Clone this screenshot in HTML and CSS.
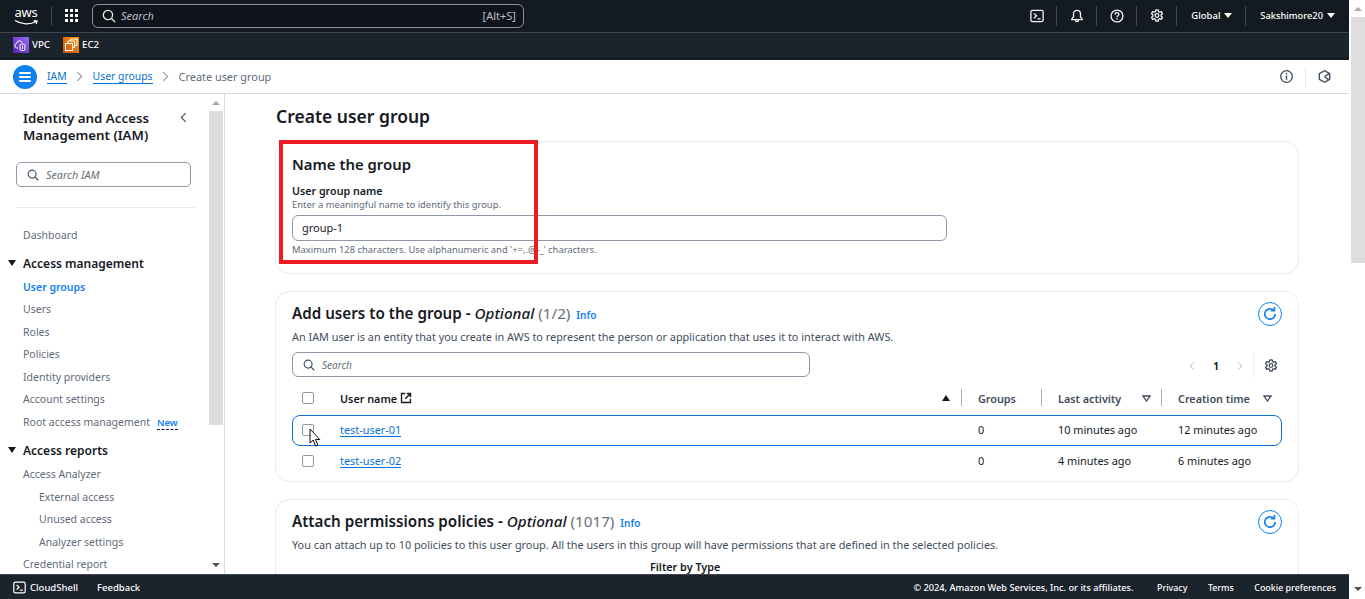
FILE: index.html
```html
<!DOCTYPE html>
<html lang="en">
<head>
<meta charset="utf-8">
<title>Create user group</title>
<link rel="stylesheet" href="styles.css">
</head>
<body>
<svg class="defs" width="0" height="0" aria-hidden="true">
  <symbol id="i-search" viewBox="0 0 16 16"><circle cx="6.8" cy="6.8" r="5.3" fill="none" stroke="currentColor" stroke-width="1.5"/><path d="M10.8 10.8L15 15" fill="none" stroke="currentColor" stroke-width="1.6"/></symbol>
  <symbol id="i-gear" viewBox="0 0 16 16"><path d="M6.7 1h2.6l.4 2 1.3.7 1.9-.7 1.3 2.3-1.5 1.3v1.600l1.500 1.300-1.300 2.300-1.900-.7-1.300.7-.4 2H6.700l-.4-2-1.300-.7-1.900.7-1.300-2.300 1.500-1.300V6.600L1.800 5.300 3.100 3l1.900.7 1.300-.7z" fill="none" stroke="currentColor" stroke-width="1.5" stroke-linejoin="round"/><circle cx="8" cy="7.4" r="2.1" fill="none" stroke="currentColor" stroke-width="1.5"/></symbol>
  <symbol id="i-shell" viewBox="0 0 16 16"><rect x="1" y="1.5" width="14" height="13" rx="2" fill="none" stroke="currentColor" stroke-width="1.5"/><path d="M4.5 5l3 2.7-3 2.8M8.5 11.2H12" fill="none" stroke="currentColor" stroke-width="1.5"/></symbol>
  <symbol id="i-refresh" viewBox="0 0 16 16"><path d="M13.2 8a5.2 5.2 0 1 1-1.6-3.8" fill="none" stroke="currentColor" stroke-width="1.7"/><path d="M12.4 1v3.6H8.8" fill="none" stroke="currentColor" stroke-width="1.7"/></symbol>
</svg>

<div class="window">
  <div class="page">
    <header class="topbar">
      <div class="bar-main">
        <div class="logo">
          <span class="logo-word">aws</span>
          <svg class="logo-smile" viewBox="0 0 26 7"><path d="M1 1.500C7 5.500 17 6 23 2.500M20.500 1.500l3.500.5-1 3.200" fill="none" stroke="#fff" stroke-width="1.300"/></svg>
        </div>
        <span class="vsep tall"></span>
        <div class="apps"><i></i><i></i><i></i><i></i><i></i><i></i><i></i><i></i><i></i></div>
        <div class="global-search">
          <svg class="gs-icon"><use href="#i-search"/></svg>
          <span class="gs-text">Search</span>
          <span class="gs-key">[Alt+S]</span>
        </div>
        <div class="top-right">
          <svg class="ti"><use href="#i-shell"/></svg>
          <span class="vsep"></span>
          <svg class="ti" viewBox="0 0 16 16"><path d="M8 1.500c-2.600 0-4 1.900-4 4.300V9l-2 2.600v.6h12v-.6L12 9V5.800C12 3.400 10.600 1.500 8 1.500zM6.300 12.500c0 1.200.7 2 1.700 2s1.700-.8 1.700-2" fill="none" stroke="currentColor" stroke-width="1.500"/></svg>
          <span class="vsep"></span>
          <svg class="ti" viewBox="0 0 16 16"><circle cx="8" cy="8" r="6.800" fill="none" stroke="currentColor" stroke-width="1.500"/><path d="M5.800 6.200c0-1.300 1-2 2.200-2s2.200.8 2.200 1.900c0 1.700-2.200 1.600-2.200 3.400" fill="none" stroke="currentColor" stroke-width="1.500"/><rect x="7.200" y="10.500" width="1.600" height="1.600" fill="currentColor"/></svg>
          <span class="vsep"></span>
          <svg class="ti"><use href="#i-gear"/></svg>
          <span class="vsep"></span>
          <span class="menu region">Global<b class="tri"></b></span>
          <span class="vsep"></span>
          <span class="menu user">Sakshimore20<b class="tri"></b></span>
        </div>
      </div>
      <div class="bar-fav">
        <span class="fav">
          <svg class="svc vpc" viewBox="0 0 16 16"><path d="M5 11H3.800a2.300 2.300 0 0 1-.3-4.500 3 3 0 0 1 5.700-.9" fill="none" stroke="#fff" stroke-width="1"/><rect x="7" y="7" width="5" height="6.500" rx="1.500" fill="none" stroke="#fff" stroke-width="1"/><path d="M9.500 8.500v3.500" stroke="#fff" stroke-width="1"/></svg>VPC
        </span>
        <span class="fav">
          <svg class="svc ec2" viewBox="0 0 16 16"><rect x="2.500" y="6.500" width="7" height="7" fill="none" stroke="#fff" stroke-width="1"/><path d="M5 6V4h6.500v6.500H10M7.500 3.500V2h6.500v6.500H12" fill="none" stroke="#fff" stroke-width="1"/></svg>EC2
        </span>
      </div>
    </header>

    <nav class="crumbs">
      <span class="burger"><i></i><i></i><i></i></span>
      <a class="crumb">IAM</a>
      <svg class="chev" viewBox="0 0 8 12"><path d="M1.500 1l5 5-5 5" fill="none" stroke="currentColor" stroke-width="1.300"/></svg>
      <a class="crumb">User groups</a>
      <svg class="chev" viewBox="0 0 8 12"><path d="M1.500 1l5 5-5 5" fill="none" stroke="currentColor" stroke-width="1.300"/></svg>
      <span class="crumb-cur">Create user group</span>
      <div class="crumb-tools">
        <svg class="tool" viewBox="0 0 16 16"><circle cx="8" cy="8" r="6.200" fill="none" stroke="currentColor" stroke-width="1.400"/><path d="M8 7v4.500" stroke="currentColor" stroke-width="1.500"/><rect x="7.200" y="4.200" width="1.600" height="1.600" fill="currentColor"/></svg>
        <span class="tool-sep"></span>
        <svg class="tool" viewBox="0 0 16 16"><path d="M8 1.800l5.500 3.100v6.200L8 14.200l-5.500-3.100V4.900z" fill="none" stroke="currentColor" stroke-width="1.500"/><path d="M8 8l5-3M8 8l4 3" stroke="currentColor" stroke-width="1.500"/></svg>
      </div>
    </nav>

    <div class="body-row">
      <aside class="side">
        <div class="side-scroll">
          <div class="side-head">
            <h2>Identity and Access Management (IAM)</h2>
            <svg class="side-close" viewBox="0 0 8 12"><path d="M6.500 1l-5 5 5 5" fill="none" stroke="currentColor" stroke-width="1.300"/></svg>
          </div>
          <div class="side-search">
            <svg class="ss-icon"><use href="#i-search"/></svg><span>Search IAM</span>
          </div>
          <hr class="side-rule">
          <a class="nav dash">Dashboard</a>
          <div class="nav-group first"><b class="down"></b>Access management</div>
          <a class="nav active">User groups</a>
          <a class="nav">Users</a>
          <a class="nav">Roles</a>
          <a class="nav">Policies</a>
          <a class="nav">Identity providers</a>
          <a class="nav">Account settings</a>
          <a class="nav">Root access management<span class="new">New</span></a>
          <div class="nav-group"><b class="down"></b>Access reports</div>
          <a class="nav">Access Analyzer</a>
          <a class="nav sub">External access</a>
          <a class="nav sub">Unused access</a>
          <a class="nav sub">Analyzer settings</a>
          <a class="nav">Credential report</a>
        </div>
        <div class="side-bar">
          <b class="sb-up"></b>
          <span class="sb-thumb"></span>
          <b class="sb-down"></b>
        </div>
      </aside>

      <main class="main">
        <h1>Create user group</h1>

        <section class="card name-card">
          <h2>Name the group</h2>
          <div class="f-label">User group name</div>
          <div class="f-desc">Enter a meaningful name to identify this group.</div>
          <div class="f-input">group-1</div>
          <div class="f-desc hint">Maximum 128 characters. Use alphanumeric and '+=,.@-_' characters.</div>
          <span class="highlight"></span>
        </section>

        <section class="card users-card">
          <div class="card-head">
            <h2>Add users to the group - <em>Optional</em> <span class="count">(1/2)</span> <a class="info">Info</a></h2>
            <span class="refresh"><svg><use href="#i-refresh"/></svg></span>
          </div>
          <p class="card-desc">An IAM user is an entity that you create in AWS to represent the person or application that uses it to interact with AWS.</p>
          <div class="tools-row">
            <div class="tbl-search"><svg class="ss-icon"><use href="#i-search"/></svg><span>Search</span></div>
            <div class="pager">
              <svg class="pg" viewBox="0 0 8 12"><path d="M6.500 1l-5 5 5 5" fill="none" stroke="currentColor" stroke-width="1.200"/></svg>
              <b>1</b>
              <svg class="pg" viewBox="0 0 8 12"><path d="M1.500 1l5 5-5 5" fill="none" stroke="currentColor" stroke-width="1.200"/></svg>
              <span class="pg-sep"></span>
              <svg class="pg-gear"><use href="#i-gear"/></svg>
            </div>
          </div>
          <div class="tbl">
            <div class="tr thead">
              <div class="td chk"><span class="box"></span></div>
              <div class="td th-name"><strong>User name</strong>
                <svg class="ext" viewBox="0 0 16 16"><path d="M7 2H2v12h12V9M9 2h5v5M14 2L7 9" fill="none" stroke="currentColor" stroke-width="1.800"/></svg>
                <b class="tri-up"></b></div>
              <div class="td th"><span class="sep"></span>Groups</div>
              <div class="td th"><span class="sep"></span>Last activity<svg class="tri-sort" viewBox="0 0 9 7"><path d="M1 1h7L4.500 6z" fill="none" stroke="currentColor" stroke-width="1.300"/></svg></div>
              <div class="td th"><span class="sep"></span>Creation time<svg class="tri-sort" viewBox="0 0 9 7"><path d="M1 1h7L4.500 6z" fill="none" stroke="currentColor" stroke-width="1.300"/></svg></div>
            </div>
            <div class="tr row hover">
              <div class="td chk"><span class="box"></span></div>
              <div class="td"><a class="ulink">test-user-01</a></div>
              <div class="td num">0</div>
              <div class="td num">10 minutes ago</div>
              <div class="td num">12 minutes ago</div>
              <svg class="cursor" viewBox="0 0 12 19"><path d="M1 1v14l3.200-3 2.300 6 2.300-1-2.300-5.500h4.300z" fill="#fff" stroke="#111" stroke-width="1"/></svg>
            </div>
            <div class="tr row">
              <div class="td chk"><span class="box"></span></div>
              <div class="td"><a class="ulink">test-user-02</a></div>
              <div class="td num">0</div>
              <div class="td num">4 minutes ago</div>
              <div class="td num">6 minutes ago</div>
            </div>
          </div>
        </section>

        <section class="card policy-card">
          <div class="card-head">
            <h2>Attach permissions policies - <em>Optional</em> <span class="count">(1017)</span> <a class="info">Info</a></h2>
            <span class="refresh"><svg><use href="#i-refresh"/></svg></span>
          </div>
          <p class="card-desc">You can attach up to 10 policies to this user group. All the users in this group will have permissions that are defined in the selected policies.</p>
          <div class="filter-label">Filter by Type</div>
        </section>
      </main>
    </div>

    <footer class="foot">
      <svg class="foot-shell"><use href="#i-shell"/></svg>
      <span class="foot-item">CloudShell</span>
      <span class="foot-item feedback">Feedback</span>
      <div class="foot-right">
        <span class="copy">© 2024, Amazon Web Services, Inc. or its affiliates.</span>
        <span class="fl">Privacy</span>
        <span class="fl">Terms</span>
        <span class="fl">Cookie preferences</span>
      </div>
    </footer>
  </div>
  <div class="page-scroll">
    <b class="sb-up"></b>
    <span class="ps-thumb"></span>
    <b class="sb-down"></b>
  </div>
</div>
</body>
</html>
```

FILE: styles.css
```css
* { box-sizing: border-box; }
html, body { margin: 0; height: 100%; overflow: hidden; }
body { font-family: "Noto Sans", "Open Sans", sans-serif; font-size: 11px; color: #414d5c; background: #fff; }
.defs { position: absolute; }
h1, h2, p { margin: 0; }
a { color: inherit; text-decoration: none; }

.window { display: flex; height: 599px; }
.page { width: 1349px; display: flex; flex-direction: column; height: 599px; }

/* page scrollbar */
.page-scroll { width: 16px; display: flex; flex-direction: column; align-items: center; padding-left: 2px; background: #fff; }
.ps-thumb { width: 14px; height: 246px; background: #dedede; margin-top: 6px; }
.sb-up { width: 0; height: 0; border: 4px solid transparent; border-top: 0; border-bottom: 4px solid #a8a8a8; margin-top: 7px; }
.sb-down { width: 0; height: 0; border: 4px solid transparent; border-bottom: 0; border-top: 4px solid #505050; margin-top: auto; margin-bottom: 8px; }

/* top bar */
.topbar { flex: none; height: 60px; background: #1b232d; color: #fff; }
.bar-main { height: 33px; padding-bottom: 1px; background: #141a21; border-bottom: 1px solid #414750; display: flex; align-items: center; padding-left: 14px; }
.logo { width: 24px; height: 20px; display: flex; flex-direction: column; align-items: center; }
.logo-word { font-size: 13px; line-height: 13px; letter-spacing: -.2px; }
.logo-smile { width: 25px; height: 7px; }
.vsep { width: 1px; height: 20px; background: #414750; }
.vsep.tall { margin-left: 13px; }
.apps { display: grid; grid-template-columns: repeat(3, 3px); gap: 2px; margin-left: 13px; }
.apps i { width: 3px; height: 3px; background: #fff; }
.global-search { width: 432px; height: 24px; margin-left: 14px; border: 1px solid #8d9196; border-radius: 6px; background: #0f141a; display: flex; align-items: center; padding: 0 7px 0 9px; }
.gs-icon { width: 14px; height: 14px; color: #e9ebed; }
.gs-text { font-style: italic; color: #b6bec9; margin-left: 5px; font-size: 11px; }
.gs-key { margin-left: auto; color: #b6bec9; font-size: 11px; }
.top-right { margin-left: auto; display: flex; align-items: center; padding-right: 14px; }
.ti { width: 14px; height: 14px; color: #f2f3f3; margin: 0 12.500px; }
.menu { font-size: 9.500px; font-weight: 500; display: flex; align-items: center; }
.region { width: 68px; padding-left: 14px; }
.user { font-size: 9.300px; padding-left: 14px; }
.tri { width: 0; height: 0; border: 4px solid transparent; border-bottom: 0; border-top: 5px solid #fff; margin-left: 4px; }
.bar-fav { height: 26px; padding: 0 0 2px 13px; display: flex; align-items: center; gap: 13px; font-size: 9.700px; font-weight: 500; border-bottom: 1px solid #0f141a; }
.fav { display: flex; align-items: center; gap: 3px; }
.svc { width: 16px; height: 16px; }
.vpc { background: linear-gradient(45deg, #4d27a8, #a166ff); }
.ec2 { background: linear-gradient(45deg, #c8511b, #ff9900); }

/* breadcrumbs */
.crumbs { flex: none; height: 34px; border-bottom: 1px solid #d5d9dc; display: flex; align-items: center; padding: 0 13px; background: #fff; font-size: 10.400px; }
.burger { width: 24px; height: 24px; border-radius: 50%; background: #0f80f0; display: flex; flex-direction: column; justify-content: center; align-items: center; gap: 2px; margin-right: 10px; }
.burger i { width: 12px; height: 2px; background: #fff; border-radius: 1px; }
.crumb { color: #0972d3; border-bottom: 1px solid #0972d3; line-height: 13px; }
.chev { width: 7px; height: 11px; color: #8d99a8; margin: 0 9.500px; }
.crumb-cur { color: #5f6b7a; font-size: 10.900px; }
.crumb-tools { margin-left: auto; display: flex; align-items: center; margin-right: 4px; }
.tool { width: 15px; height: 15px; color: #414d5c; }
.tool-sep { width: 1px; height: 20px; background: #e9ebed; margin: 0 11px; }

/* body row */
.body-row { flex: 1; display: flex; min-height: 0; overflow: hidden; }

/* sidebar */
.side { flex: none; width: 225px; border-right: 1px solid #d5dbe5; display: flex; overflow: hidden; }
.side-scroll { width: 209px; padding: 16px 0 0 23px; flex: none; }
.side-head { display: flex; justify-content: space-between; align-items: flex-start; padding-right: 22px; }
.side-head h2 { font-size: 13.300px; line-height: 17px; font-weight: 600; color: #16191f; width: 150px; }
.side-close { width: 7px; height: 11px; color: #414d5c; margin-top: 2px; }
.side-search { width: 175px; height: 25px; margin: 18px 0 0 -7px; border: 1px solid #8d99a8; border-radius: 5px; display: flex; align-items: center; padding-left: 10px; font-style: italic; color: #687078; font-size: 10.800px; }
.ss-icon { width: 12px; height: 12px; color: #414d5c; margin-right: 7px; flex: none; }
.side-rule { border: 0; border-top: 1px solid #e9ebed; margin: 20px 14px 0 -7px; }
.nav { display: block; height: 22.500px; line-height: 22.500px; color: #5f6b7a; white-space: nowrap; font-size: 10.500px; }
.nav.dash { margin-top: 16px; }
.nav.sub { padding-left: 16px; }
.nav.active { color: #0f80f0; font-weight: 600; }
.nav-group { font-size: 12px; line-height: 18px; font-weight: 600; color: #16191f; position: relative; margin-top: 9px; height: 21px; }
.nav-group.first { margin-top: 8px; }
.down { position: absolute; left: -15px; top: 5px; width: 0; height: 0; border: 4px solid transparent; border-bottom: 0; border-top: 6px solid #16191f; }
.new { color: #0f80f0; font-size: 9.500px; font-weight: 600; margin-left: 7px; border-bottom: 1px dashed #16191f; display: inline-block; line-height: 12px; }
.side-bar { width: 14px; display: flex; flex-direction: column; align-items: center; }
.sb-thumb { width: 14px; height: 314px; background: #dedede; margin-top: 6px; }
.side-bar .sb-up { margin-top: 7px; }
.side-bar .sb-down { margin-bottom: 7px; }

/* main */
.main { flex: 1; padding: 10px 50px 0 50px; min-width: 0; overflow: hidden; }
.main h1 { font-size: 17.500px; line-height: 24px; font-weight: 600; color: #16191f; margin: 0 0 13px 1px; }
.card { border: 1px solid #e9ebed; border-radius: 14px; padding: 9px 16px 0; background: #fff; position: relative; margin-bottom: 17px; }
.name-card { height: 133px; padding-top: 12px; }
.name-card h2 { font-size: 14.900px; line-height: 20px; font-weight: 600; color: #16191f; }
.f-label { font-size: 10.700px; line-height: 14px; font-weight: 600; color: #16191f; margin-top: 10px; }
.f-desc { font-size: 9.400px; line-height: 13px; color: #5f6b7a; }
.f-input { width: 655px; height: 26px; margin-top: 4px; border: 1px solid #8d99a8; border-radius: 6px; padding-left: 9px; line-height: 24px; color: #16191f; }
.hint { margin-top: 2px; }
.highlight { position: absolute; left: 3px; top: -2px; width: 259px; height: 124px; border: 4px solid #ed1c24; pointer-events: none; }
.users-card { height: 191px; }
.policy-card { height: 120px; margin-bottom: 0; }
.card-head { display: flex; justify-content: space-between; align-items: center; height: 26px; }
.card-head h2 { font-size: 15.200px; line-height: 20px; font-weight: 600; color: #16191f; }
.card-head em { font-style: italic; font-weight: 500; }
.count { font-weight: 400; color: #687078; }
.info { font-size: 10px; font-weight: 600; color: #0f80f0; margin-left: 2px; }
.refresh { width: 24px; height: 24px; border: 1px solid #0f80f0; border-radius: 50%; display: flex; align-items: center; justify-content: center; color: #0f80f0; }
.refresh svg { width: 16px; height: 16px; }
.card-desc { font-size: 10.850px; line-height: 14px; color: #414d5c; margin-top: 3px; }

.tools-row { display: flex; align-items: center; justify-content: space-between; margin-top: 8px; height: 25px; }
.tbl-search { width: 518px; height: 25px; border: 1px solid #8d99a8; border-radius: 6px; display: flex; align-items: center; padding-left: 10px; font-style: italic; color: #687078; font-size: 10px; }
.pager { display: flex; align-items: center; padding: 2px 4px 0 0; color: #16191f; font-size: 10px; }
.pg { width: 6px; height: 10px; color: #aab7b8; }
.pager b { margin: 0 18px; font-weight: 700; }
.pg-sep { width: 1px; height: 24px; background: #e9ebed; margin: 0 10px; }
.pg-gear { width: 14px; height: 14px; color: #414d5c; }

.tbl { margin-top: 4px; }
.tr { display: grid; grid-template-columns: 48px 621px 80px 120px 121px; align-items: center; position: relative; }
.thead { height: 34px; font-weight: 600; color: #414d5c; font-size: 10.800px; }
.row { height: 31px; padding-bottom: 2px; font-size: 10.900px; color: #16191f; }
.row.hover { border: 1px solid #0972d3; border-radius: 8px; padding-bottom: 2px; grid-template-columns: 47px 621px 80px 120px 120px; }
.row.hover .chk { padding-left: 9px; }
.chk { padding-left: 10px; }
.box { display: block; width: 12px; height: 12px; border: 1px solid #8d99a8; border-radius: 2px; background: #fff; }
.th-name { display: flex; align-items: center; color: #16191f; }
.th-name strong { font-weight: 600; }
.ext { width: 12px; height: 12px; margin-left: 3px; }
.tri-up { margin-left: auto; margin-right: 11px; width: 0; height: 0; border: 4px solid transparent; border-top: 0; border-bottom: 6px solid #16191f; }
.th { position: relative; padding-left: 17px; display: flex; align-items: center; }
.sep { position: absolute; left: 0; top: 50%; width: 1px; height: 17px; margin-top: -9px; background: #aab2bc; }
.tri-sort { margin-left: auto; margin-right: 10px; width: 9px; height: 7px; color: #414d5c; flex: none; }
.num { padding-left: 17px; }
.ulink { color: #0972d3; border-bottom: 1px solid #0972d3; line-height: 13px; display: inline-block; }
.cursor { position: absolute; left: 16px; top: 12px; width: 12px; height: 19px; }
.filter-label { margin: 8px 0 0 358px; font-size: 10.800px; line-height: 13px; font-weight: 600; color: #16191f; }

/* footer */
.foot { flex: none; height: 25px; background: #1b232d; color: #fff; display: flex; align-items: center; padding: 0 13px; font-size: 9.500px; font-weight: 500; border-top: 1px solid #414750; }
.foot-shell { width: 13px; height: 13px; margin-right: 4px; }
.feedback { margin-left: 19px; }
.foot-right { margin-left: auto; display: flex; gap: 20.500px; font-size: 8.900px; }
.copy { margin-right: 3px; font-size: 9.200px; }
```
